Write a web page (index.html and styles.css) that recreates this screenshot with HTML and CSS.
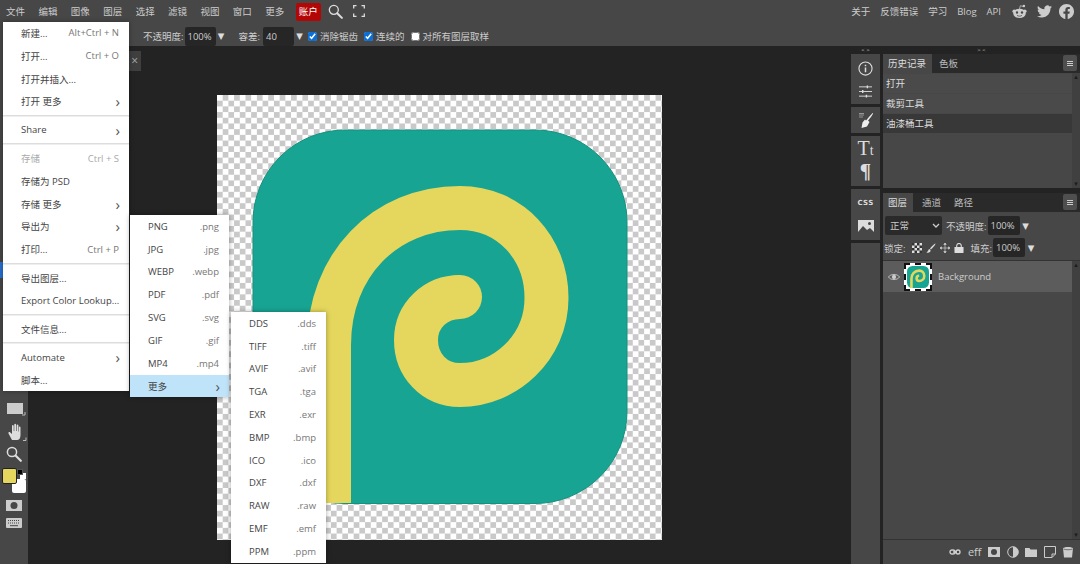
FILE: index.html
```html
<!DOCTYPE html>
<html lang="zh">
<head>
<meta charset="utf-8">
<title>Photopea</title>
<link rel="stylesheet" href="styles.css">
</head>
<body>
<div class="app">
  <header class="topbar">
    <nav class="mainmenu">
      <span>文件</span><span>编辑</span><span>图像</span><span>图层</span><span>选择</span><span>滤镜</span><span>视图</span><span>窗口</span><span>更多</span>
      <span class="account">账户</span>
      <svg class="ic-search" viewBox="0 0 16 16"><circle cx="6.2" cy="6.2" r="4.8" fill="none" stroke="#ddd" stroke-width="1.4"/><path d="M9.8 9.8l5 5" stroke="#ddd" stroke-width="2.2" stroke-linecap="round"/></svg>
      <svg class="ic-full" viewBox="0 0 12 12"><path d="M.7 3.5V.7h2.8M8.5.7h2.8v2.8M11.3 8.5v2.8H8.5M3.5 11.3H.7V8.5" fill="none" stroke="#ddd" stroke-width="1.3"/></svg>
    </nav>
    <nav class="links">
      <span>关于</span><span>反馈错误</span><span>学习</span><span>Blog</span><span>API</span>
      <svg class="social" viewBox="0 0 24 24"><circle cx="3.5" cy="11.5" r="2.8" fill="#ccc"/><circle cx="20.5" cy="11.5" r="2.8" fill="#ccc"/><circle cx="19" cy="3.2" r="2" fill="#ccc"/><path d="M12 8l1.3-5.2 5 1.2" fill="none" stroke="#ccc" stroke-width="1.2"/><ellipse cx="12" cy="15" rx="10" ry="7.5" fill="#ccc"/><circle cx="8" cy="13.5" r="1.9" fill="#474747"/><circle cx="16" cy="13.5" r="1.9" fill="#474747"/><path d="M8 18.2c2.4 1.6 5.6 1.6 8 0" fill="none" stroke="#474747" stroke-width="1.2"/></svg>
      <svg class="social" viewBox="0 0 24 24"><path fill="#ccc" d="M23.95 4.57a10 10 0 0 1-2.82.77 4.96 4.96 0 0 0 2.16-2.72c-.95.56-2 .96-3.12 1.19a4.92 4.92 0 0 0-8.38 4.48C7.69 8.1 4.07 6.13 1.64 3.16a4.82 4.82 0 0 0-.67 2.48c0 1.71.87 3.21 2.19 4.1a4.9 4.9 0 0 1-2.23-.62v.06a4.92 4.92 0 0 0 3.95 4.83 5 5 0 0 1-2.21.08 4.94 4.94 0 0 0 4.6 3.42A9.87 9.87 0 0 1 0 19.54a14 14 0 0 0 7.56 2.21c9.05 0 14-7.5 14-13.98 0-.21 0-.42-.02-.63A9.94 9.94 0 0 0 24 4.59z"/></svg>
      <svg class="social fb" viewBox="0 0 24 24"><path fill="#ccc" d="M24 12.07C24 5.41 18.63 0 12 0S0 5.4 0 12.07C0 18.1 4.39 23.1 10.13 24v-8.44H7.08v-3.49h3.04V9.41c0-3.02 1.8-4.7 4.54-4.7 1.31 0 2.68.24 2.68.24v2.97h-1.5c-1.5 0-1.96.93-1.96 1.89v2.26h3.32l-.53 3.5h-2.8V24C19.62 23.1 24 18.1 24 12.07"/></svg>
    </nav>
  </header>

  <section class="optionsbar">
    <span class="lbl">不透明度:</span><span class="field">100%</span><span class="tri">▼</span>
    <span class="lbl tol">容差:</span><span class="field wide">40</span><span class="tri">▼</span>
    <label class="chk"><input type="checkbox" checked><span>消除锯齿</span></label>
    <label class="chk"><input type="checkbox" checked><span>连续的</span></label>
    <label class="chk"><input type="checkbox"><span>对所有图层取样</span></label>
  </section>

  <main class="workspace">
    <aside class="toolbar">
      <div class="tool-active"></div>
      <svg class="tool t-rect" viewBox="0 0 20 14"><rect x="1" y="1" width="16" height="11" fill="#ccc"/><path d="M19 10v3h-3" fill="none" stroke="#bbb"/></svg>
      <svg class="tool t-hand" viewBox="0 0 20 18"><path fill="#ddd" d="M5 17L1.5 10.5c-.6-1.2 1-2 1.8-1L5 11V3c0-1.2 1.7-1.2 1.7 0v5h.6V1.6c0-1.2 1.8-1.2 1.8 0V8h.6V2.5c0-1.2 1.7-1.2 1.7 0V8.500h.5V4.500c0-1.200 1.600-1.200 1.600 0V12c0 2.500-1 5-3 5z"/><path d="M19 14.500v3h-3" fill="none" stroke="#bbb"/></svg>
      <svg class="tool t-mag" viewBox="0 0 16 16"><circle cx="6" cy="6" r="4.600" fill="none" stroke="#ddd" stroke-width="1.500"/><path d="M9.500 9.500l5.300 5.300" stroke="#ddd" stroke-width="2.200" stroke-linecap="round"/></svg>
      <div class="swatches">
        <span class="sw-bg"></span><span class="sw-fg"></span><span class="sw-mini-w"></span><span class="sw-mini-k"></span>
      </div>
      <svg class="tool t-mask" viewBox="0 0 16 11"><rect width="16" height="11" fill="#ccc"/><circle cx="8" cy="5.500" r="3.500" fill="#474747"/></svg>
      <svg class="tool t-keys" viewBox="0 0 16 10"><rect width="16" height="10" rx="1" fill="#ccc"/><path d="M2 2.500h12M2 5h12" stroke="#474747" stroke-dasharray="1 1"/><path d="M4 7.700h8" stroke="#474747"/></svg>
    </aside>

    <section class="stage">
      <div class="doctab"><span>×</span></div>
      <div class="canvas">
        <svg class="art" viewBox="217 95 445 445">
          <rect x="253" y="130" width="374" height="373.500" rx="92" fill="#18a492" stroke="#14917f" stroke-width="1"/>
          <path d="M329 503V345C329 265 385 208 460 208C510 208 546.500 248 546.500 298C546.500 348 505 385 460 385C434 385 416 365 416 340C416 315 436 297 460 297" fill="none" stroke="#e5d75d" stroke-width="44"/>
          <circle cx="460" cy="297" r="22" fill="#e5d75d"/>
        </svg>
      </div>
    </section>

    <aside class="dock">
      <div class="handle">&lt; &gt;</div>
      <div class="dockgroup g1">
        <svg viewBox="0 0 16 16" class="di"><circle cx="8" cy="8" r="7" fill="none" stroke="#ddd" stroke-width="1.200"/><path d="M8 7v5M8 4v1.500" stroke="#ddd" stroke-width="1.600"/></svg>
        <svg viewBox="0 0 16 14" class="di"><path d="M1 2h14M1 7h14M1 12h14" stroke="#ddd"/><path d="M10 .5v3M5 5.500v3M9 10.500v3" stroke="#ddd" stroke-width="1.500"/></svg>
      </div>
      <div class="dockgroup g2">
        <svg viewBox="0 0 16 16" class="di"><path fill="#eee" d="M15 1c.6.600-3 5.500-5 7.500l1.500 1.500L9 14.500 3.500 16l1-5.500L7 7.500 8 8.500C10 6.500 14.400.4 15 1z"/><path d="M1 3h5M1 5h4M1 1.500h5" stroke="#aaa" stroke-width=".8"/></svg>
      </div>
      <div class="dockgroup g3">
        <span class="gl-t">T<small>t</small></span>
        <span class="gl-p">¶</span>
      </div>
      <div class="dockgroup g4">
        <span class="gl-css">CSS</span>
        <svg viewBox="0 0 16 12" class="di"><rect width="16" height="12" fill="#ddd"/><path d="M0 12l5-6 4 4 3-2 4 4z" fill="#474747"/><circle cx="11.500" cy="3.500" r="1.500" fill="#474747"/></svg>
      </div>
      <div class="dockgroup g5"></div>
    </aside>

    <aside class="panels">
      <div class="handle h2">&gt; &lt;</div>
      <div class="panel history">
        <div class="tabs">
          <span class="tab on">历史记录</span><span class="tab">色板</span>
          <span class="burger"><i></i></span>
        </div>
        <div class="histbody">
          <div class="hlist">
            <div class="hrow">打开</div>
            <div class="hrow">裁剪工具</div>
            <div class="hrow sel">油漆桶工具</div>
          </div>
          <div class="sb"><span>▴</span><span>▾</span></div>
        </div>
      </div>
      <div class="panel layers">
        <div class="tabs">
          <span class="tab on">图层</span><span class="tab">通道</span><span class="tab">路径</span>
          <span class="burger"><i></i></span>
        </div>
        <div class="layopts">
          <div class="optrow r1">
            <span class="blend">正常<svg viewBox="0 0 8 5"><path d="M1 1l3 3 3-3" fill="none" stroke="#ccc" stroke-width="1.300"/></svg></span>
            <span class="lbl">不透明度:</span><span class="field">100%</span><span class="tri">▼</span>
          </div>
          <div class="optrow r2">
            <span class="lbl">锁定:</span>
            <span class="locks">
              <svg viewBox="0 0 10 10"><rect width="10" height="10" fill="#ddd"/><path d="M0 0h2.500v2.500H0zM5 0h2.500v2.500H5zM2.500 2.500H5V5H2.500zM7.500 2.500H10V5H7.500zM0 5h2.500v2.500H0zM5 5h2.500v2.500H5zM2.500 7.500H5V10H2.500zM7.500 7.500H10V10H7.500z" fill="#333"/></svg>
              <svg viewBox="0 0 10 10"><path d="M9.500 .5C8 1 5 4 4 5.500L5 6.500C6.500 5 9.500 2 9.500 .5zM3.500 6C2 6.500 2.500 8.500 .5 9.500c2 .5 4.500 0 4-2.500z" fill="#ddd"/></svg>
              <svg viewBox="0 0 10 10"><path d="M5 0v10M0 5h10M5 0L3.800 1.500h2.400zM5 10L3.800 8.500h2.400zM0 5l1.500-1.200v2.400zM10 5L8.500 3.800v2.400z" stroke="#ccc" stroke-width=".7" fill="#ccc"/></svg>
              <svg viewBox="0 0 10 11"><rect y="4.500" width="10" height="6.500" rx=".5" fill="#ddd"/><path d="M2.500 5V3a2.500 2.500 0 0 1 5 0v2" fill="none" stroke="#ddd" stroke-width="1.200"/></svg>
            </span>
            <span class="lbl">填充:</span><span class="field">100%</span><span class="tri">▼</span>
          </div>
        </div>
        <div class="laylist">
          <div class="layitems">
            <div class="layer">
              <svg class="eye" viewBox="0 0 14 9"><path d="M.5 4.500C3 .5 11 .5 13.500 4.500 11 8.500 3 8.500 .5 4.500z" fill="none" stroke="#ccc"/><circle cx="7" cy="4.500" r="2.500" fill="#ccc"/></svg>
              <div class="thumb">
                <svg viewBox="253 130 374 374"><rect x="253" y="130" width="374" height="373.500" rx="92" fill="#18a492"/><path d="M329 503V345C329 265 385 208 460 208C510 208 546.500 248 546.500 298C546.500 348 505 385 460 385C434 385 416 365 416 340C416 315 436 297 460 297" fill="none" stroke="#e5d75d" stroke-width="44"/></svg>
              </div>
              <span class="lname">Background</span>
            </div>
          </div>
          <div class="sb"><span>▴</span><span>▾</span></div>
        </div>
        <footer class="layfoot">
          <svg viewBox="0 0 12 6"><path d="M1 3a2 2 0 0 1 2-2h1a2 2 0 0 1 0 4H3a2 2 0 0 1-2-2zM7 3a2 2 0 0 1 2-2h0a2 2 0 0 1 0 4h0a2 2 0 0 1-2-2zM4 3h4" fill="none" stroke="#ccc" stroke-width="1.400"/></svg>
          <span class="eff">eff</span>
          <svg viewBox="0 0 12 10"><rect width="12" height="10" fill="#ccc"/><circle cx="6" cy="5" r="3" fill="#474747"/></svg>
          <svg viewBox="0 0 12 12"><circle cx="6" cy="6" r="5.300" fill="none" stroke="#ccc"/><path d="M6 .7a5.300 5.300 0 0 1 0 10.600z" fill="#ccc"/></svg>
          <svg viewBox="0 0 12 10"><path d="M0 1h4.500l1 1.500H12V10H0z" fill="#ccc"/></svg>
          <svg viewBox="0 0 12 12"><path d="M.5.500h11V8L8 11.500H.5zM11.500 8H8v3.500" fill="none" stroke="#ccc"/></svg>
          <svg viewBox="0 0 12 12"><path d="M1 2c2-1.500 8-1.500 10 0L10 11.500H2z" fill="#ccc"/><path d="M1.500 3c2 1 7 1 9 0" fill="none" stroke="#474747" stroke-width=".7"/></svg>
        </footer>
      </div>
    </aside>
  </main>

  <div class="menu m-file">
    <div class="mi"><span>新建...</span><em>Alt+Ctrl + N</em></div>
    <div class="mi"><span>打开...</span><em>Ctrl + O</em></div>
    <div class="mi"><span>打开并插入...</span></div>
    <div class="mi"><span>打开 更多</span><b>›</b></div>
    <hr>
    <div class="mi"><span>Share</span><b>›</b></div>
    <hr>
    <div class="mi off"><span>存储</span><em>Ctrl + S</em></div>
    <div class="mi"><span>存储为 PSD</span></div>
    <div class="mi"><span>存储 更多</span><b>›</b></div>
    <div class="mi"><span>导出为</span><b>›</b></div>
    <div class="mi"><span>打印...</span><em>Ctrl + P</em></div>
    <hr>
    <div class="mi"><span>导出图层...</span></div>
    <div class="mi"><span>Export Color Lookup...</span></div>
    <hr>
    <div class="mi"><span>文件信息...</span></div>
    <hr>
    <div class="mi"><span>Automate</span><b>›</b></div>
    <div class="mi"><span>脚本...</span></div>
  </div>

  <div class="menu m-export">
    <div class="mi"><span>PNG</span><em>.png</em></div>
    <div class="mi"><span>JPG</span><em>.jpg</em></div>
    <div class="mi"><span>WEBP</span><em>.webp</em></div>
    <div class="mi"><span>PDF</span><em>.pdf</em></div>
    <div class="mi"><span>SVG</span><em>.svg</em></div>
    <div class="mi"><span>GIF</span><em>.gif</em></div>
    <div class="mi"><span>MP4</span><em>.mp4</em></div>
    <div class="mi hot"><span>更多</span><b>›</b></div>
  </div>

  <div class="menu m-more">
    <div class="mi"><span>DDS</span><em>.dds</em></div>
    <div class="mi"><span>TIFF</span><em>.tiff</em></div>
    <div class="mi"><span>AVIF</span><em>.avif</em></div>
    <div class="mi"><span>TGA</span><em>.tga</em></div>
    <div class="mi"><span>EXR</span><em>.exr</em></div>
    <div class="mi"><span>BMP</span><em>.bmp</em></div>
    <div class="mi"><span>ICO</span><em>.ico</em></div>
    <div class="mi"><span>DXF</span><em>.dxf</em></div>
    <div class="mi"><span>RAW</span><em>.raw</em></div>
    <div class="mi"><span>EMF</span><em>.emf</em></div>
    <div class="mi"><span>PPM</span><em>.ppm</em></div>
  </div>
</div>
</body>
</html>
```
FILE: styles.css
```css
* { box-sizing: border-box; }
html, body { margin: 0; padding: 0; height: 100%; overflow: hidden; }
body {
  font-family: "Open Sans", "Noto Sans CJK SC", sans-serif;
  font-size: 9.5px;
  color: #ccc;
  background: #232323;
}
.app { position: relative; width: 1080px; height: 564px; display: flex; flex-direction: column; overflow: hidden; }

/* top bar */
.topbar { height: 22px; background: #474747; display: flex; justify-content: space-between; align-items: center; }
.mainmenu { display: flex; align-items: center; padding-left: 6px; gap: 13.400px; }
.account { background: #b30606; color: #fff; width: 25px; height: 18px; line-height: 18px; text-align: center; border-radius: 2px; margin-left: -2px; margin-top: 1px; }
.ic-search { width: 15px; height: 15px; margin-left: -6px; }
.ic-full { width: 12px; height: 12px; margin-left: -3px; }
.links { display: flex; align-items: center; gap: 10px; padding-right: 6px; }
.social { width: 15px; height: 15px; margin-left: 1px; }
.social + .social { margin-left: 0; }
.social.fb { margin-left: -3px; }

/* options */
.optionsbar { height: 24px; background: #474747; display: flex; align-items: center; padding: 4px 0 0 143px; }
.lbl { white-space: nowrap; }
.field { display: block; background: #262626; color: #ccc; height: 19px; line-height: 19px; width: 31px; padding-left: 3px; border-radius: 2px; margin-left: 1px; }
.field.wide { margin-left: 3px; }
.tri { font-size: 8.500px; width: 11px; text-align: center; color: #ddd; font-family: "DejaVu Sans", sans-serif; }
.tol { margin-left: 12px; }
.chk { display: flex; align-items: center; gap: 3px; margin-left: 6px; }
.tri + .chk { margin-left: 3px; }
.chk input { appearance: auto; margin: 0; width: 9px; height: 9px; accent-color: #0b6fd6; }

/* workspace */
.workspace { flex: 1; display: flex; min-height: 0; }
.toolbar { width: 28px; flex: none; background: #474747; display: flex; flex-direction: column; position: relative; }
.tool-active { width: 3px; height: 16px; background: #2a6fd0; margin-top: 216px; }
.tool { display: block; }
.t-rect { width: 20px; height: 14px; margin: 124px 0 0 6px; }
.t-hand { width: 20px; height: 18px; margin: 7px 0 0 7px; }
.t-mag { width: 16px; height: 16px; margin: 5px 0 0 6px; }
.swatches { position: relative; height: 27px; margin-top: 6px; }
.sw-fg { position: absolute; left: 2px; top: 0; width: 15px; height: 16px; background: #e5d75d; border: 1px solid #222; border-radius: 2px; }
.sw-bg { position: absolute; left: 12px; top: 11px; width: 14px; height: 14px; background: #fff; border-radius: 2px; }
.sw-mini-w { position: absolute; left: 20px; top: 5px; width: 6px; height: 6px; background: #fff; }
.sw-mini-k { position: absolute; left: 17px; top: 1px; width: 6px; height: 6px; background: #000; border: 1px solid #555; }
.t-mask { width: 16px; height: 11px; margin: 5px 0 0 6px; }
.t-keys { width: 16px; height: 10px; margin: 7px 0 0 6px; }

/* stage */
.stage { flex: 1; min-width: 0; position: relative; display: flex; justify-content: center; align-items: flex-start; padding-top: 49px; background: #232323; }
.doctab { position: absolute; left: 98px; top: 5px; width: 15px; height: 20px; background: #3f3f3f; color: #aaa; font-size: 12px; line-height: 20px; text-align: right; padding-right: 3px; }
.canvas { width: 445px; height: 445px; background: repeating-conic-gradient(#c9c9c9 0 25%, #fff 0 50%) 0 0 / 11.400px 11.400px; }
.art { display: block; width: 445px; height: 445px; }

/* dock */
.dock { width: 32px; flex: none; display: flex; flex-direction: column; padding-right: 3px; gap: 3px; background: #232323; }
.handle { height: 8px; line-height: 8px; font-size: 6px; text-align: center; color: #ccc; margin-bottom: -3px; }
.dockgroup { background: #474747; display: flex; flex-direction: column; align-items: center; }
.g1 { height: 50px; padding-top: 7px; gap: 9px; }
.g1 .di:first-child { width: 15px; height: 15px; }
.g1 .di:last-child { width: 15px; height: 13px; }
.g2 { height: 26px; justify-content: center; }
.g2 .di { width: 16px; height: 16px; }
.g3 { height: 50px; padding-top: 1px; }
.gl-t { font-family: "Liberation Serif", serif; font-size: 20px; line-height: 23px; color: #ddd; }
.gl-t small { font-size: 14px; }
.gl-p { font-family: "Liberation Serif", serif; font-size: 21px; line-height: 22px; margin-top: -2px; font-weight: bold; color: #ddd; }
.g4 { height: 51px; padding-top: 10px; gap: 12px; }
.gl-css { font-family: "DejaVu Sans", sans-serif; font-size: 7px; line-height: 9px; font-weight: bold; color: #ddd; letter-spacing: .3px; }
.g4 .di { width: 16px; height: 12px; }
.g5 { flex: 1; }

/* panels */
.panels { width: 197px; flex: none; display: flex; flex-direction: column; background: #232323; min-width: 0; }
.panels .h2 { margin-bottom: 0; color: #bbb; }
.panel { display: flex; flex-direction: column; }
.history { height: 134px; }
.layers { flex: 1; margin-top: 5px; min-height: 0; }
.tabs { height: 19px; display: flex; align-items: stretch; background: #2a2a2a; position: relative; flex: none; }
.tab { padding: 0 9px 0 4px; line-height: 19px; color: #bbb; }
.tab.on { background: #474747; color: #ddd; padding: 0 6px 0 5px; }
.tab.on + .tab { margin-left: 5px; }
.history .tab.on + .tab { margin-left: 3px; }
.burger { position: absolute; right: 3px; top: 1px; width: 14px; height: 16px; background: #4f4f4f; border-radius: 2px; display: flex; align-items: center; justify-content: center; }
.burger i { display: block; width: 6px; height: 5px; border-top: 1px solid #ccc; border-bottom: 1px solid #ccc; background: linear-gradient(#ccc, #ccc) center / 100% 1px no-repeat; }
.histbody { flex: 1; display: flex; min-height: 0; background: #404040; }
.hlist { flex: 1; display: flex; flex-direction: column; background: #474747; padding-top: 1px; }
.hrow { height: 19px; line-height: 19px; padding-left: 3px; background: #4a4a4a; margin-bottom: 1px; color: #ddd; }
.hrow.sel { background: #383838; margin-bottom: 0; }
.sb { width: 8px; flex: none; display: flex; flex-direction: column; justify-content: space-between; align-items: center; font-size: 7px; line-height: 8px; color: #1c1c1c; font-family: "DejaVu Sans", sans-serif; background: #404040; }

.layopts { height: 48px; background: #474747; flex: none; padding: 4px 0 0 1px; }
.optrow { display: flex; align-items: center; height: 19px; }
.optrow .tri { width: 12px; margin-left: 0; }
.optrow .field { width: 32px; }
.optrow.r1 { padding-left: 1px; }
.optrow.r2 { margin-top: 3px; }
.blend { width: 57px; height: 19px; background: #2a2a2a; line-height: 19px; padding-left: 5px; margin-right: 4px; border-radius: 2px; display: flex; align-items: center; justify-content: space-between; padding-right: 2px; color: #ccc; }
.blend svg { width: 8px; height: 5px; }
.locks { display: flex; align-items: center; gap: 4px; margin: 0 7px 0 6px; }
.locks svg { width: 10px; height: 10px; }
.laylist { flex: 1; background: #474747; display: flex; min-height: 0; border-top: 1px solid #333; }
.layitems { flex: 1; min-width: 0; }
.layer { height: 31px; background: #5c5c5c; display: flex; align-items: center; padding-left: 5px; }
.eye { width: 12px; height: 8px; flex: none; }
.thumb { width: 28px; height: 28px; margin-left: 4px; border: 2px dashed #111; background: #fff; padding: 1px; flex: none; }
.thumb svg { display: block; width: 100%; height: 100%; }
.lname { margin-left: 6px; color: #ccc; }
.layfoot { height: 25px; background: #474747; border-top: 1px solid #333; display: flex; align-items: center; justify-content: flex-end; gap: 6.500px; padding-right: 6px; flex: none; }
.layfoot svg { width: 12px; height: 12px; }
.eff { font-size: 11px; color: #ccc; line-height: 12px; }

/* menus */
.menu { position: absolute; background: #fff; color: #444; box-shadow: 0 0 5px rgba(0, 0, 0, .35); }
.m-file { left: 3px; top: 21.600px; width: 126px; }
.m-export { left: 130px; top: 215px; width: 99px; }
.m-more { left: 231px; top: 312px; width: 95px; }
.mi { height: 22.800px; display: flex; justify-content: space-between; align-items: center; padding: 0 10px 0 18px; white-space: nowrap; }
.mi em { font-style: normal; color: #777; }
.mi b { font-weight: normal; font-size: 15px; color: #555; line-height: 10px; margin-right: -1px; }
.mi.off span, .mi.off em { color: #aaa; }
.mi.hot { background: #bfe3f9; }
.menu hr { border: 0; margin: 0; height: 5.560px; background: linear-gradient(#ddd, #ddd) 0 50% / 100% 1.500px no-repeat; }
```
